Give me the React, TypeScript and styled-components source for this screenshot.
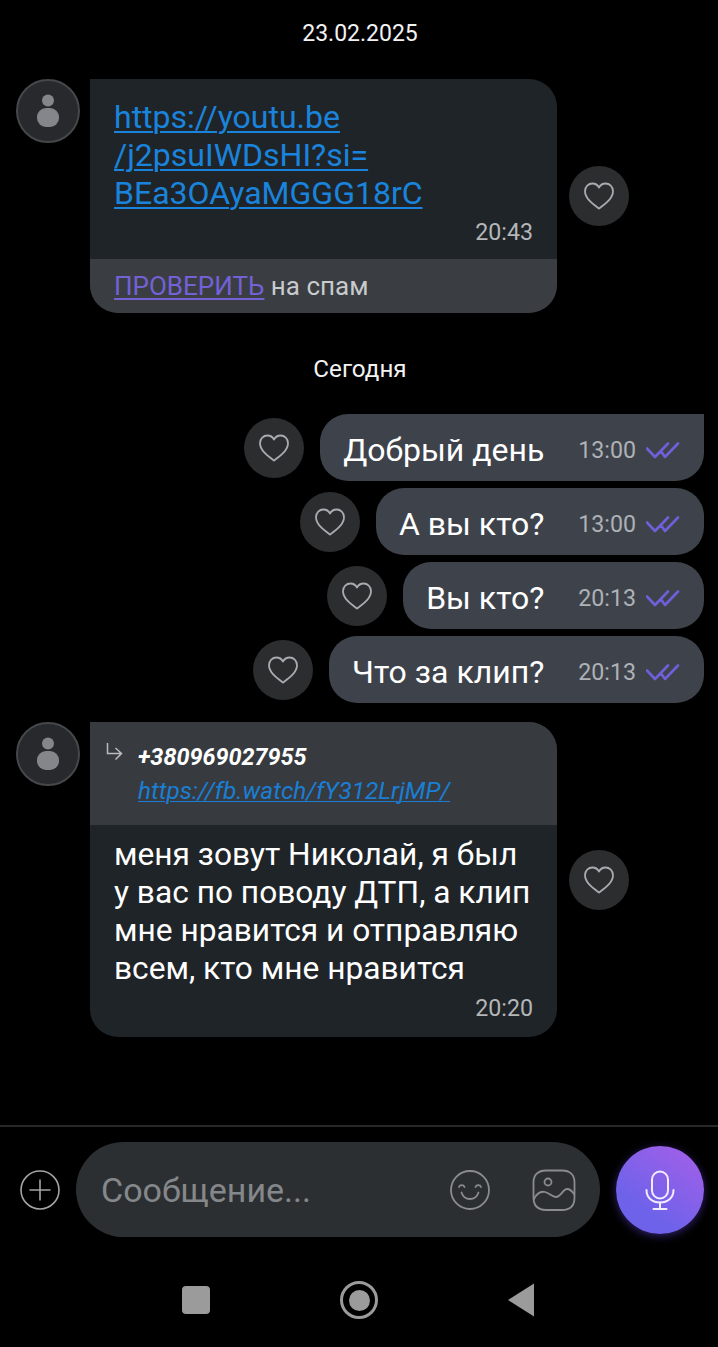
import React from 'react';
import styled, { createGlobalStyle } from 'styled-components';

const GlobalStyle = createGlobalStyle`
  html, body {
    margin: 0;
    padding: 0;
    background: #000;
  }
  * {
    box-sizing: border-box;
  }
`;

const HeartIcon = () => (
  <svg width="32" height="30" viewBox="0 0 32 30" fill="none">
    <path
      d="M16 27.5C10 23 2 17.5 2 10.2 2 5.6 5.5 2.5 9.4 2.5c2.800 0 5.200 1.400 6.600 4 1.400-2.600 3.800-4 6.600-4 3.900 0 7.400 3.100 7.400 7.700C30 17.500 22 23 16 27.500Z"
      stroke="#a9acae"
      strokeWidth="1.800"
      strokeLinejoin="round"
    />
  </svg>
);

const PersonIcon = () => (
  <svg width="24" height="34" viewBox="0 0 24 34" fill="#83878b">
    <circle cx="12" cy="6.500" r="6" />
    <rect x="1" y="14" width="22" height="19" rx="9" />
  </svg>
);

const DoubleTick = () => (
  <svg width="34" height="18" viewBox="0 0 34 18" fill="none">
    <path
      d="M1 7.500l8 8.500L22 2.500M15.500 11L19 16 32 2.500"
      stroke="#6f5fd8"
      strokeWidth="2.600"
      strokeLinecap="round"
      strokeLinejoin="round"
    />
  </svg>
);

const Avatar = () => (
  <AvatarCircle>
    <PersonIcon />
  </AvatarCircle>
);

const Like = () => (
  <LikeButton>
    <HeartIcon />
  </LikeButton>
);

const SentMessage = (props: { text: string; time: string; first?: boolean }) => (
  <SentRow>
    <Like />
    <SentBubble $first={props.first}>
      <SentText>{props.text}</SentText>
      <SentTime>{props.time}</SentTime>
      <DoubleTick />
    </SentBubble>
  </SentRow>
);

const App = () => {
  return (
    <Page>
      <GlobalStyle />
      <Messages>
        <DateLabel>23.02.2025</DateLabel>

        <ReceivedRow>
          <Avatar />
          <ReceivedBubble>
            <BubbleBody>
              <BigLink>
                https://youtu.be
                <br />
                /j2psuIWDsHI?si=
                <br />
                BEa3OAyaMGGG18rC
              </BigLink>
              <ReceivedTime>20:43</ReceivedTime>
            </BubbleBody>
            <SpamBar>
              <SpamLink>ПРОВЕРИТЬ</SpamLink> на спам
            </SpamBar>
          </ReceivedBubble>
          <Like />
        </ReceivedRow>

        <TodayLabel>Сегодня</TodayLabel>

        <SentList>
          <SentMessage first text="Добрый день" time="13:00" />
          <SentMessage text="А вы кто?" time="13:00" />
          <SentMessage text="Вы кто?" time="20:13" />
          <SentMessage text="Что за клип?" time="20:13" />
        </SentList>

        <ForwardedRow>
          <Avatar />
          <ReceivedBubble>
            <ForwardHeader>
              <svg width="18" height="18" viewBox="0 0 18 18" fill="none">
                <path
                  d="M1.500 0v10.500h14M9.500 5l6 5.500-6 6"
                  stroke="#b9bbbd"
                  strokeWidth="1.500"
                />
              </svg>
              <ForwardInfo>
                <ForwardName>+380969027955</ForwardName>
                <ForwardLink>https://fb.watch/fY312LrjMP/</ForwardLink>
              </ForwardInfo>
            </ForwardHeader>
            <ForwardBody>
              <BodyText>
                меня зовут Николай, я был
                <br />
                у вас по поводу ДТП, а клип
                <br />
                мне нравится и отправляю
                <br />
                всем, кто мне нравится
              </BodyText>
              <ReceivedTime>20:20</ReceivedTime>
            </ForwardBody>
          </ReceivedBubble>
          <Like />
        </ForwardedRow>
      </Messages>

      <Composer>
        <PlusButton>
          <svg width="42" height="42" viewBox="0 0 42 42" fill="none" stroke="#a3a5a7" strokeWidth="1.600">
            <circle cx="21" cy="21" r="19" />
            <path d="M21 10.500v21M10.500 21h21" />
          </svg>
        </PlusButton>
        <InputPill>
          <Placeholder>Сообщение...</Placeholder>
          <PillIcons>
            <svg width="42" height="42" viewBox="0 0 42 42" fill="none" stroke="#8a8c8e" strokeWidth="1.800" strokeLinecap="round">
              <circle cx="21" cy="21" r="19" />
              <path d="M10 18c1-2.500 4.500-2.500 5.500 0M26.500 18c1-2.500 4.500-2.500 5.500 0" />
              <path d="M12.500 23.500c1.500 4.500 5 6.500 8.500 6.500s7-2 8.500-6.500" />
            </svg>
            <svg width="44" height="42" viewBox="0 0 44 42" fill="none" stroke="#8a8c8e" strokeWidth="1.800" strokeLinecap="round">
              <path d="M14 1.500h16c8 0 12.500 4.500 12.500 12v15c0 8-4.500 12.500-12.500 12.500H14C6 41 1.500 36.500 1.500 28.500v-15C1.500 6 6 1.500 14 1.500Z" />
              <circle cx="16" cy="13" r="3.500" />
              <path d="M2 30c3-6 7-8 11-7 5 1.300 7 5 11 5 5 0 7-8 11-8 3 0 5 2 7 5" />
            </svg>
          </PillIcons>
        </InputPill>
        <MicButton>
          <svg width="30" height="40" viewBox="0 0 30 40" fill="none" stroke="#f3ecff" strokeWidth="2" strokeLinecap="round">
            <rect x="7" y="1.500" width="16" height="27" rx="8" />
            <path d="M1.500 20c0 8 6 12.500 13.500 12.500S28.500 28 28.500 20" />
            <path d="M15 32.500V39M8.500 39h13" />
          </svg>
        </MicButton>
      </Composer>

      <NavBar>
        <NavSquare />
        <NavHome>
          <NavDot />
        </NavHome>
        <svg width="28" height="34" viewBox="0 0 28 34" fill="#9b9b9b">
          <path d="M27 .500V33.500L1 17Z" />
        </svg>
      </NavBar>
    </Page>
  );
};

export default App;

const Page = styled.div`
  width: 718px;
  height: 1347px;
  background: #000;
  display: flex;
  flex-direction: column;
  overflow: hidden;
  font-family: 'Roboto', 'Liberation Sans', sans-serif;
  color: #fff;
`;

const Messages = styled.main`
  height: 1125px;
  padding: 20px 14px 0 16px;
  display: flex;
  flex-direction: column;
`;

const DateLabel = styled.div`
  height: 27px;
  margin-bottom: 32px;
  text-align: center;
  font-size: 23px;
  line-height: 27px;
  color: #f2f2f2;
`;

const TodayLabel = styled.div`
  height: 27px;
  margin: 43px 0 31px;
  text-align: center;
  font-size: 24.200px;
  line-height: 27px;
  color: #f2f2f2;
`;

const ReceivedRow = styled.section`
  display: flex;
  align-items: center;
`;

const ForwardedRow = styled(ReceivedRow)`
  margin-top: 19px;
`;

const AvatarCircle = styled.div`
  align-self: flex-start;
  flex: none;
  width: 64px;
  height: 64px;
  margin-right: 10px;
  border-radius: 50%;
  background: #27292c;
  border: 2px solid #45484b;
  display: flex;
  align-items: center;
  justify-content: center;
`;

const LikeButton = styled.div`
  flex: none;
  width: 60px;
  height: 60px;
  border-radius: 50%;
  background: #2b2d2f;
  display: flex;
  align-items: center;
  justify-content: center;
`;

const ReceivedBubble = styled.div`
  width: 467px;
  margin-right: 12px;
  border-radius: 0 28px 28px 28px;
  overflow: hidden;
  background: #1f2429;
`;

const BubbleBody = styled.div`
  height: 180px;
  padding: 19px 24px 0 24px;
`;

const BigLink = styled.a`
  display: block;
  font-size: 32px;
  line-height: 38px;
  color: #1a84dc;
  text-decoration: underline;
  text-decoration-thickness: 1.500px;
  text-underline-offset: 3px;
`;

const ReceivedTime = styled.div`
  margin-top: 5px;
  text-align: right;
  font-size: 23.200px;
  line-height: 30px;
  color: #b4b6b8;
`;

const SpamBar = styled.div`
  height: 54px;
  padding-left: 24px;
  background: #3a3e43;
  font-size: 26px;
  line-height: 54px;
  color: #c8cacc;
`;

const SpamLink = styled.a`
  color: #7361d6;
  text-decoration: underline;
  text-decoration-thickness: 1.500px;
  text-underline-offset: 3px;
`;

const SentList = styled.div`
  display: flex;
  flex-direction: column;
  gap: 7px;
`;

const SentRow = styled.div`
  display: flex;
  align-items: center;
  justify-content: flex-end;
  gap: 16px;
`;

const SentBubble = styled.div<{ $first?: boolean }>`
  height: 67px;
  padding: 5px 24px 0 23px;
  display: flex;
  align-items: center;
  background: #3e434b;
  border-radius: ${({ $first }) => ($first ? '28px 0 28px 28px' : '28px')};
`;

const SentText = styled.span`
  margin-right: 34px;
  font-size: 32px;
  line-height: 38px;
  color: #fff;
`;

const SentTime = styled.span`
  margin-right: 10px;
  font-size: 23.200px;
  line-height: 30px;
  color: #aeb1b5;
`;

const ForwardHeader = styled.div`
  height: 103px;
  padding: 21px 0 0 16px;
  display: flex;
  align-items: flex-start;
  gap: 14px;
  background: #373b40;
`;

const ForwardInfo = styled.div`
  display: flex;
  flex-direction: column;
  margin-top: -3px;
`;

const ForwardName = styled.div`
  font-size: 23.400px;
  line-height: 34px;
  font-weight: 700;
  font-style: italic;
  color: #fff;
`;

const ForwardLink = styled.a`
  font-size: 24.400px;
  line-height: 34px;
  font-style: italic;
  color: #1a7fd4;
  text-decoration: underline;
  text-decoration-thickness: 1px;
  text-underline-offset: 2px;
`;

const ForwardBody = styled.div`
  height: 212px;
  padding: 11px 24px 0 24px;
`;

const BodyText = styled.div`
  font-size: 31.700px;
  line-height: 38px;
  color: #fff;
`;

const Composer = styled.footer`
  height: 122px;
  padding: 15px 14px 0 19px;
  border-top: 2px solid #26282a;
  display: flex;
  align-items: flex-start;
`;

const PlusButton = styled.div`
  flex: none;
  width: 42px;
  height: 42px;
  margin: 27px 15px 0 0;
`;

const InputPill = styled.div`
  flex: none;
  width: 524px;
  height: 95px;
  padding: 0 25px;
  margin-right: 16px;
  border-radius: 48px;
  background: #2c2f32;
  display: flex;
  align-items: center;
  justify-content: space-between;
`;

const Placeholder = styled.span`
  font-size: 34px;
  color: #85888a;
`;

const PillIcons = styled.div`
  display: flex;
  align-items: center;
  gap: 41px;
  margin-right: -1px;
`;

const MicButton = styled.div`
  flex: none;
  width: 88px;
  height: 88px;
  margin-top: 4px;
  border-radius: 50%;
  background: linear-gradient(215deg, #a75fe8 0%, #6f62ea 70%);
  box-shadow: 0 2px 8px rgba(100, 70, 220, 0.5);
  display: flex;
  align-items: center;
  justify-content: center;
`;

const NavBar = styled.nav`
  flex: 1;
  padding: 6px 183px 0 182px;
  display: flex;
  align-items: center;
  justify-content: space-between;
`;

const NavSquare = styled.div`
  width: 28px;
  height: 28px;
  border-radius: 4px;
  background: #9b9b9b;
`;

const NavHome = styled.div`
  width: 38px;
  height: 38px;
  margin-left: 1px;
  border-radius: 50%;
  border: 3px solid #9b9b9b;
  display: flex;
  align-items: center;
  justify-content: center;
`;

const NavDot = styled.div`
  width: 21px;
  height: 21px;
  border-radius: 50%;
  background: #9b9b9b;
`;
